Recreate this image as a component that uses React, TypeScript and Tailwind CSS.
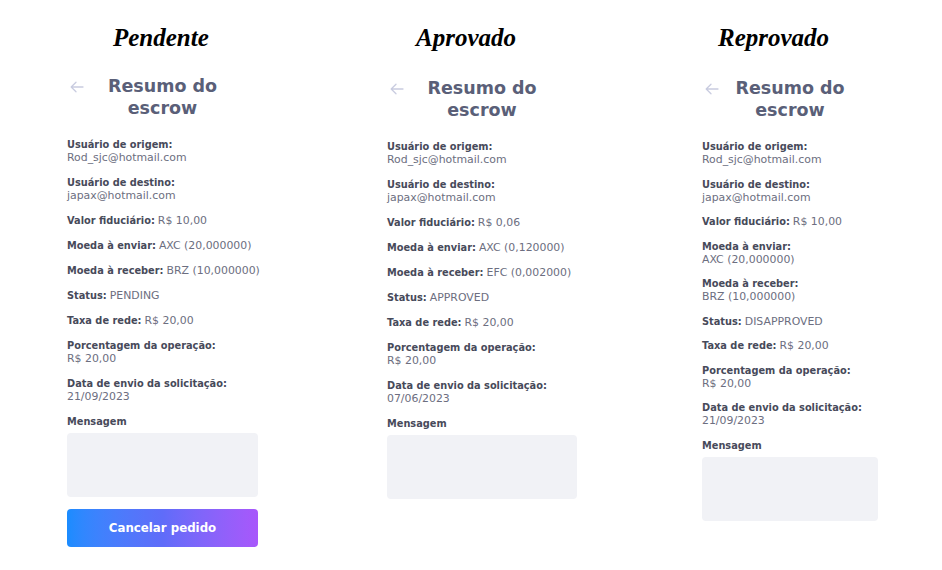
import React from "react";

type Field = { label: string; value: string; stacked?: boolean };

const font = { fontFamily: '"DejaVu Sans", "Liberation Sans", sans-serif' };

function BackArrow() {
  return (
    <svg width="14" height="12" viewBox="0 0 14 12" fill="none" className="shrink-0">
      <path d="M13 6H1.5M6 1.2L1.2 6L6 10.8" stroke="#c9cce0" strokeWidth="1.3" strokeLinecap="round" strokeLinejoin="round" />
    </svg>
  );
}

function Column({
  heading,
  headingIndent,
  width,
  topShift,
  gap,
  fields,
  button,
}: {
  heading: string;
  headingIndent: string;
  width: string;
  topShift: string;
  gap: string;
  fields: Field[];
  button?: boolean;
}) {
  return (
    <div className={`flex flex-col ${width}`} style={font}>
      <div className={`pt-[24px] h-[75px] ${headingIndent}`}>
        <div
          className="text-[25px] leading-[28px] font-bold italic text-black whitespace-nowrap"
          style={{ fontFamily: '"Liberation Serif", "DejaVu Serif", serif' }}
        >
          {heading}
        </div>
      </div>
      <div className={`flex items-start ${topShift}`}>
        <div className="w-[24px] pl-[3px] pt-[6px]">
          <BackArrow />
        </div>
        <div className="flex-1 text-center text-[17.5px] leading-[22px] font-bold text-[#5a5f78]">
          Resumo do
          <br />
          escrow
        </div>
        <div className="w-[24px]" />
      </div>
      <div className={`mt-[19px] flex flex-col leading-[13px] ${gap}`}>
        {fields.map((f) =>
          f.stacked ? (
            <div key={f.label}>
              <div className="h-[13px] text-[9.8px] leading-[13px] font-bold text-[#474a5a] whitespace-nowrap">{f.label}</div>
              <div className="h-[13px] text-[10.9px] leading-[13px] text-[#6c6e80] whitespace-nowrap">{f.value}</div>
            </div>
          ) : (
            <div key={f.label} className="flex h-[13px] items-baseline gap-[3px] whitespace-nowrap">
              <span className="text-[9.8px] leading-[13px] font-bold text-[#474a5a]">{f.label}</span>
              <span className="text-[10.9px] leading-[13px] text-[#6c6e80]">{f.value}</span>
            </div>
          )
        )}
        <div>
          <div className="h-[13px] text-[9.8px] leading-[13px] font-bold text-[#474a5a]">Mensagem</div>
          <div className="mt-[5px] h-[64px] rounded-[4px] bg-[#f1f2f6]" />
          {button && (
            <button className="mt-[12px] h-[38px] w-full rounded-[4px] bg-gradient-to-r from-[#1a8cff] via-[#5f6cf9] to-[#a857fb] text-[11.8px] font-bold text-white">
              Cancelar pedido
            </button>
          )}
        </div>
      </div>
    </div>
  );
}

export default function App() {
  const col1: Field[] = [
    { label: "Usuário de origem:", value: "Rod_sjc@hotmail.com", stacked: true },
    { label: "Usuário de destino:", value: "japax@hotmail.com", stacked: true },
    { label: "Valor fiduciário:", value: "R$ 10,00" },
    { label: "Moeda à enviar:", value: "AXC (20,000000)" },
    { label: "Moeda à receber:", value: "BRZ (10,000000)" },
    { label: "Status:", value: "PENDING" },
    { label: "Taxa de rede:", value: "R$ 20,00" },
    { label: "Porcentagem da operação:", value: "R$ 20,00", stacked: true },
    { label: "Data de envio da solicitação:", value: "21/09/2023", stacked: true },
  ];
  const col2: Field[] = [
    { label: "Usuário de origem:", value: "Rod_sjc@hotmail.com", stacked: true },
    { label: "Usuário de destino:", value: "japax@hotmail.com", stacked: true },
    { label: "Valor fiduciário:", value: "R$ 0,06" },
    { label: "Moeda à enviar:", value: "AXC (0,120000)" },
    { label: "Moeda à receber:", value: "EFC (0,002000)" },
    { label: "Status:", value: "APPROVED" },
    { label: "Taxa de rede:", value: "R$ 20,00" },
    { label: "Porcentagem da operação:", value: "R$ 20,00", stacked: true },
    { label: "Data de envio da solicitação:", value: "07/06/2023", stacked: true },
  ];
  const col3: Field[] = [
    { label: "Usuário de origem:", value: "Rod_sjc@hotmail.com", stacked: true },
    { label: "Usuário de destino:", value: "japax@hotmail.com", stacked: true },
    { label: "Valor fiduciário:", value: "R$ 10,00" },
    { label: "Moeda à enviar:", value: "AXC (20,000000)", stacked: true },
    { label: "Moeda à receber:", value: "BRZ (10,000000)", stacked: true },
    { label: "Status:", value: "DISAPPROVED" },
    { label: "Taxa de rede:", value: "R$ 20,00" },
    { label: "Porcentagem da operação:", value: "R$ 20,00", stacked: true },
    { label: "Data de envio da solicitação:", value: "21/09/2023", stacked: true },
  ];
  return (
    <div className="w-[942px] h-[570px] bg-white flex items-start pl-[67px]">
      <Column heading="Pendente" headingIndent="pl-[46px]" width="w-[191px]" topShift="mt-0" gap="gap-[12px]" fields={col1} button />
      <div className="w-[129px]" />
      <Column heading="Aprovado" headingIndent="pl-[29px]" width="w-[190px]" topShift="mt-[2px]" gap="gap-[12px]" fields={col2} />
      <div className="w-[125px]" />
      <Column heading="Reprovado" headingIndent="pl-[16px]" width="w-[176px]" topShift="mt-[2px]" gap="gap-[11.5px]" fields={col3} />
    </div>
  );
}
